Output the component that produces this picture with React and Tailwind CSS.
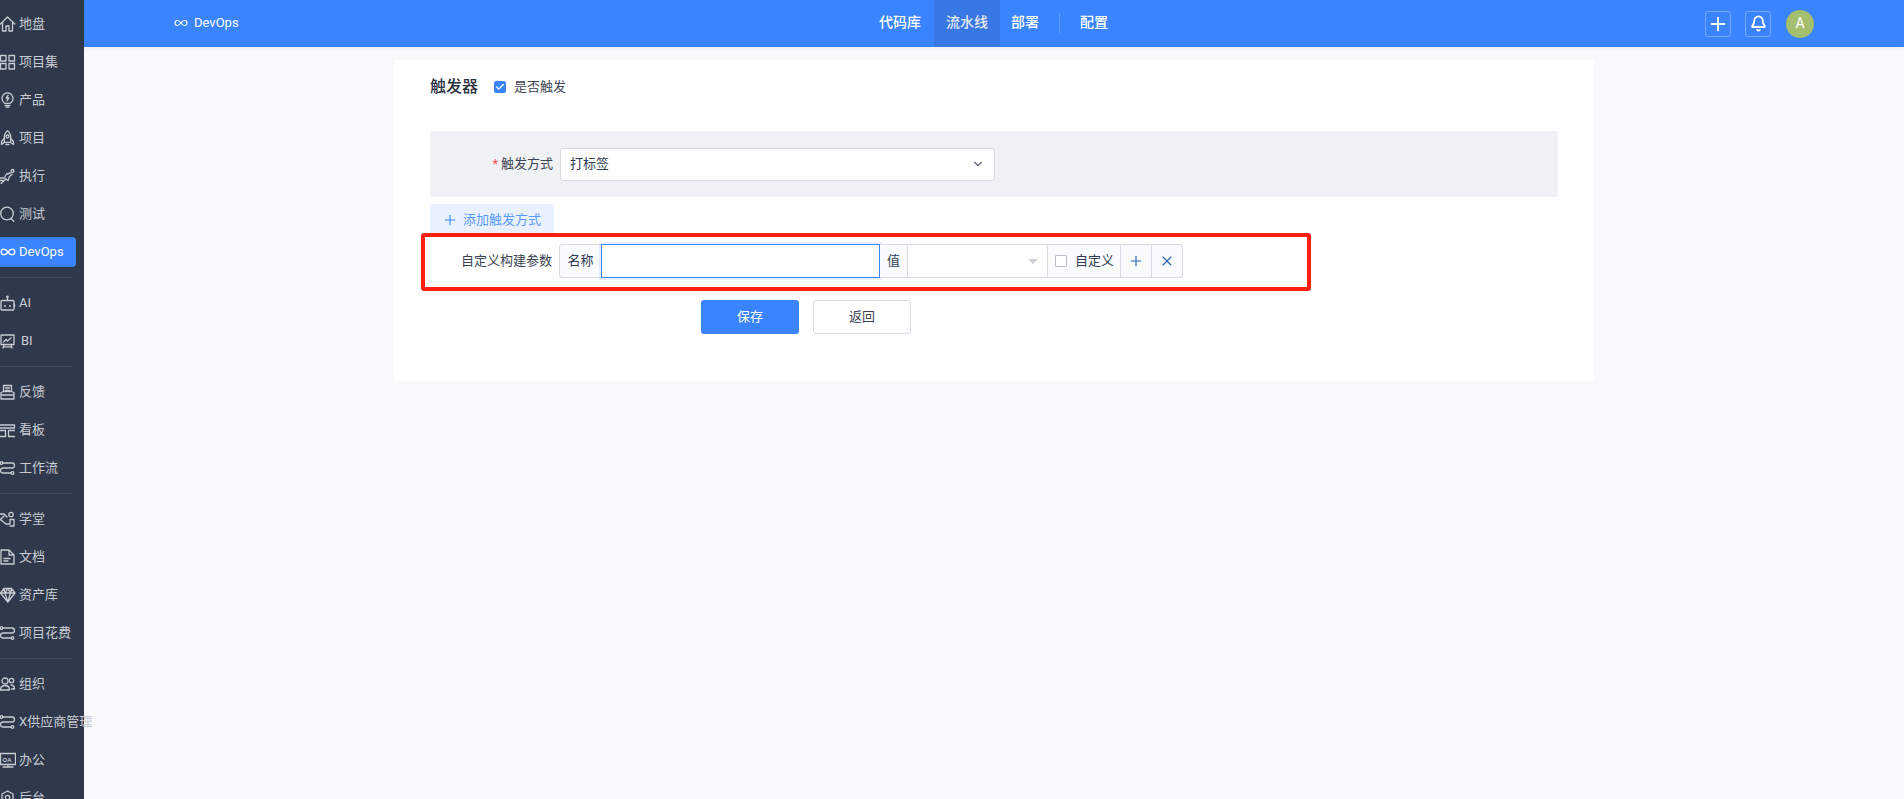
import React from "react";
import { Check, ChevronDown, Plus, X, Bell } from "lucide-react";

const FONT = "font-['Roboto','Noto_Sans_CJK_SC',sans-serif]";

const iconProps = {
  width: 16,
  height: 16,
  viewBox: "0 0 16 16",
  fill: "none",
  stroke: "currentColor",
  strokeWidth: 1.3,
  strokeLinecap: "round",
  strokeLinejoin: "round",
};

const Home = () => (
  <svg {...iconProps}>
    <path d="M.5 8 7.500 1 14.800 8M2.500 6.500v8.500h3.500v-5h3v5h3.500V6.500" />
  </svg>
);
const Grid = () => (
  <svg {...iconProps}>
    <rect x="0.500" y="1.500" width="5.500" height="5.500" />
    <rect x="9" y="1.500" width="5.500" height="5.500" />
    <rect x="0.500" y="9.500" width="5.500" height="5.500" />
    <rect x="9" y="9.500" width="5.500" height="5.500" />
  </svg>
);
const Bulb = () => (
  <svg {...iconProps}>
    <path d="M5 11.300A5.500 5.500 0 1 1 10 11.300z" />
    <path d="M5 13.300h5M6 15h3" />
    <path d="M8.200 3.200 6.200 6h2.600L6.800 8.800" />
  </svg>
);
const Rocket = () => (
  <svg {...iconProps}>
    <path d="M7.500.8c2.500 2 3.200 4.500 3.200 7v4.500H4.300V7.800c0-2.500.7-5 3.200-7z" />
    <circle cx="7.500" cy="6.500" r="1.500" />
    <path d="M4.300 8.500 1.500 11.500v3l2.800-2M10.700 8.500l2.800 3v3l-2.800-2M6 14.500h3" />
  </svg>
);
const Runner = () => (
  <svg {...iconProps}>
    <circle cx="12.500" cy="3" r="1.500" />
    <path d="M1 15.500 6 11l2 1.500 1.500-4 2.500-2M10.500 5 6.500 6 5 8.500M.5 10H5M0 12.500h3" />
  </svg>
);
const SearchIcon = () => (
  <svg {...iconProps}>
    <circle cx="7" cy="7.500" r="6.300" />
    <path d="M11 12.500l2.800 2.800" />
  </svg>
);
const Infinite = () => (
  <svg {...iconProps}>
    <path d="M8 8C6.500 6 5.500 5.200 4 5.200a2.800 2.800 0 0 0 0 5.600C5.500 10.800 6.500 10 8 8s2.500-2.800 4-2.800a2.800 2.800 0 0 1 0 5.600C10.500 10.800 9.500 10 8 8z" />
  </svg>
);
const Robot = () => (
  <svg {...iconProps}>
    <rect x="1" y="5.500" width="13" height="9.500" rx="1" />
    <path d="M7.500 5.500V2.500M4.500 11h1M9.500 11h1M14.500 9v3" />
    <circle cx="7.500" cy="1.800" r=".7" />
  </svg>
);
const Board = () => (
  <svg {...iconProps}>
    <rect x="1" y="2" width="13" height="9.500" />
    <path d="M3.500 9 6 6.500l1.500 1.500L11 5M4 11.500 3 15M11 11.500l1 3.500M3.500 13.800h8" />
  </svg>
);
const Tray = () => (
  <svg {...iconProps}>
    <path d="M3.500 7.500V1.500h8v6M1 8.500l2.500-1h8l2.500 1V15H1zM5.500 4h4M5.500 6.500h4M1 11h13" />
  </svg>
);
const Kanban = () => (
  <svg {...iconProps}>
    <path d="M0 3h14.500M0 6h14.500v-3M0 8.500h5.500v6H0M8.500 8.500h6M8.500 8.500v6h6" />
  </svg>
);
const Flow = () => (
  <svg {...iconProps}>
    <circle cx="1.500" cy="3" r="1.300" />
    <circle cx="12.500" cy="13" r="1.300" />
    <path d="M3 3h9a2.500 2.500 0 0 1 0 5H3a2.500 2.500 0 0 0 0 5h8" />
  </svg>
);
const School = () => (
  <svg {...iconProps}>
    <circle cx="11" cy="3.500" r="2.200" />
    <path d="M0 3h4l3 3M0 9l4-4M1 9l5 4h4V8.500h4V15h-4" />
  </svg>
);
const Doc = () => (
  <svg {...iconProps}>
    <path d="M1 15V1h8l5 5v9zM9 1v5h5M4 9.500h6M4 12h4" />
  </svg>
);
const Diamond = () => (
  <svg {...iconProps}>
    <path d="M4 1.500h7.500L15 6l-7.200 9L.5 6zM.5 6h14.500M5 6l2.800 9L10.500 6M4 1.500 5 6l2.800-4.500L10.500 6l1-4.500" />
  </svg>
);
const Team = () => (
  <svg {...iconProps}>
    <circle cx="5" cy="5" r="3" />
    <path d="M.5 14c0-3 2-4.500 4.500-4.500S9.500 11 9.500 14z" />
    <circle cx="11.500" cy="4.500" r="2.200" />
    <path d="M11 9c2.200 0 3.500 1.500 3.500 4h-3" />
  </svg>
);
const Office = () => (
  <svg {...iconProps}>
    <rect x="0.500" y="1.500" width="15" height="11" />
    <path d="M8 12.500V15M3 15h10" />
    <text x="2.500" y="9.500" fontSize="6" fontWeight="700" fill="currentColor" stroke="none" fontFamily="Liberation Sans">OA</text>
  </svg>
);
const Gear = () => (
  <svg {...iconProps}>
    <path d="M7.500 1 13 4v7l-5.500 3.500L2 11V4z" />
    <circle cx="7.500" cy="7.500" r="2.200" />
  </svg>
);

const SIDEBAR = [
  [
    { label: "地盘", Icon: Home },
    { label: "项目集", Icon: Grid },
    { label: "产品", Icon: Bulb },
    { label: "项目", Icon: Rocket },
    { label: "执行", Icon: Runner },
    { label: "测试", Icon: SearchIcon },
    { label: "DevOps", Icon: Infinite, active: true },
  ],
  [
    { label: "AI", Icon: Robot },
    { label: "BI", Icon: Board, wide: true },
  ],
  [
    { label: "反馈", Icon: Tray },
    { label: "看板", Icon: Kanban },
    { label: "工作流", Icon: Flow },
  ],
  [
    { label: "学堂", Icon: School },
    { label: "文档", Icon: Doc },
    { label: "资产库", Icon: Diamond },
    { label: "项目花费", Icon: Flow },
  ],
  [
    { label: "组织", Icon: Team },
    { label: "X供应商管理", Icon: Flow },
    { label: "办公", Icon: Office },
    { label: "后台", Icon: Gear },
  ],
];

function SideItem({ item }) {
  const { label, Icon, active, wide } = item;
  return (
    <div className="h-[38px] flex items-center">
      <div
        className={
          active
            ? "w-[76px] h-[30px] flex items-center rounded-r-[4px] bg-[#3a84ff] text-white"
            : "w-[76px] h-[30px] flex items-center text-[#c8ccd3]"
        }
      >
        <span className="w-[16px] shrink-0 flex">
          <Icon />
        </span>
        <span className={wide ? "ml-[5px] text-[13px] whitespace-nowrap" : "ml-[3px] text-[13px] whitespace-nowrap"}>
          {label}
        </span>
      </div>
    </div>
  );
}

function Sidebar() {
  return (
    <aside className="w-[84px] shrink-0 bg-[#2f394b] pt-[5px] h-[799px]">
      {SIDEBAR.map((group, i) => (
        <div key={i}>
          {i > 0 && (
            <div className="h-[13px] flex items-center">
              <div className="w-[72px] h-px bg-[#434c5d]" />
            </div>
          )}
          {group.map((item) => (
            <SideItem key={item.label} item={item} />
          ))}
        </div>
      ))}
    </aside>
  );
}

function Header() {
  return (
    <header className="relative h-[47px] shrink-0 flex items-center bg-[#3a84ff] text-white shadow-[0_1px_4px_rgba(0,0,0,0.05)]">
      <div className="ml-[90px] pb-[2px] flex items-center w-[705px] text-[13px]">
        <span className="w-[14px] flex">
          <svg width="14" height="14" viewBox="0 0 16 16" fill="none" stroke="currentColor" strokeWidth="1.300">
            <path d="M8 8C6.500 6 5.500 5.200 4 5.200a2.800 2.800 0 0 0 0 5.600C5.500 10.800 6.500 10 8 8s2.500-2.800 4-2.800a2.800 2.800 0 0 1 0 5.600C10.500 10.800 9.500 10 8 8z" />
          </svg>
        </span>
        <span className="ml-[6px]">DevOps</span>
      </div>
      <nav className="flex items-center h-full text-[14px] font-medium">
        <span className="w-[55px] pb-[2px]">代码库</span>
        <span className="h-full w-[66px] pb-[2px] flex items-center justify-center bg-[#3878e4] text-[#e6eaf2]">流水线</span>
        <span className="ml-[11px] pb-[2px]">部署</span>
        <span className="ml-[20px] w-px h-[20px] mb-[2px] bg-white/20" />
        <span className="ml-[20px] pb-[2px]">配置</span>
      </nav>
      <div className="ml-auto flex items-center mr-[90px]">
        <span className="w-[26px] h-[26px] flex items-center justify-center rounded-[3px] border border-white/30">
          <Plus size={22} strokeWidth={2} />
        </span>
        <span className="ml-[14px] w-[26px] h-[26px] flex items-center justify-center rounded-[3px] border border-white/30">
          <Bell size={17} strokeWidth={2.6} />
        </span>
        <span className="ml-[15px] w-[28px] h-[28px] rounded-full flex items-center justify-center bg-[#a6bf6f] text-[14px]">A</span>
      </div>
    </header>
  );
}

function TriggerForm() {
  return (
    <section className="relative w-[1200px] h-[321px] mx-auto mt-[13px] bg-white rounded-[2px] px-[36px]">
      <div className="flex items-center h-[53px]">
        <h2 className="text-[16px] font-medium text-[#2b3240]">触发器</h2>
        <span className="ml-[16px] w-[12px] h-[12px] rounded-[2px] bg-[#3a84ff] flex items-center justify-center text-white">
          <Check size={10} strokeWidth={3} />
        </span>
        <span className="ml-[8px] text-[13px] text-[#3c4353]">是否触发</span>
      </div>

      <div className="mt-[18px] h-[66px] bg-[#f0f1f4] flex items-center">
        <label className="w-[123px] text-right text-[13px] text-[#3c4353]">
          <span className="text-[#f5534f] mr-[3px]">*</span>触发方式
        </label>
        <div className="ml-[7px] w-[435px] h-[33px] flex items-center justify-between px-[9px] bg-white rounded-[3px] border border-[#d8dbe6] text-[13px] text-[#313c52]">
          打标签
          <ChevronDown size={14} className="text-[#5b6478]" />
        </div>
      </div>

      <button className="mt-[7px] w-[124px] h-[32px] flex items-center pl-[12px] gap-[5px] rounded-[3px] bg-[#e9f1fe] text-[13px] text-[#5a9bff]">
        <Plus size={16} strokeWidth={1.6} className="text-[#3a84ff]" />
        添加触发方式
      </button>

      <div className="mt-[8px] flex items-center h-[34px]">
        <label className="w-[122px] text-right text-[13px] text-[#3c4353]">自定义构建参数</label>
        <div className="ml-[7px] flex h-[34px] text-[13px] text-[#313c52]">
          <span className="w-[42px] flex items-center justify-center bg-[#fafbfd] border border-r-0 border-[#d8dbe6] rounded-l-[3px]">名称</span>
          <input className="w-[279px] h-full bg-white border border-[#3a84ff] shadow-[0_0_0_2px_rgba(58,132,255,0.12)] outline-none" />
          <span className="w-[28px] flex items-center justify-center bg-[#fafbfd] border-y border-r border-[#d8dbe6]">值</span>
          <div className="w-[139px] flex items-center justify-end pr-[9px] bg-white border-y border-[#d8dbe6]">
            <span className="w-0 h-0 border-x-[5px] border-x-transparent border-t-[5px] border-t-[#ccd0d9]" />
          </div>
          <span className="w-[74px] flex items-center pl-[7px] bg-[#fafbfd] border border-[#d8dbe6]">
            <span className="w-[12px] h-[12px] border border-[#b8bdc9] rounded-[1px] bg-white" />
            <span className="ml-[8px]">自定义</span>
          </span>
          <span className="w-[31px] flex items-center justify-center bg-[#fafbfd] border-y border-r border-[#d8dbe6] text-[#2d5fb4]">
            <Plus size={16} strokeWidth={1.7} />
          </span>
          <span className="w-[31px] flex items-center justify-center bg-[#fafbfd] border-y border-r border-[#d8dbe6] rounded-r-[3px] text-[#2d5fb4]">
            <X size={16} strokeWidth={1.7} />
          </span>
        </div>
      </div>

      <div className="mt-[22px] flex ml-[271px]">
        <button className="w-[98px] h-[34px] rounded-[3px] bg-[#3a84ff] text-white text-[13px]">保存</button>
        <button className="ml-[14px] w-[98px] h-[34px] rounded-[3px] bg-white border border-[#d8dbe6] text-[#3c4353] text-[13px]">返回</button>
      </div>

      {/* red annotation drawn on top of the screenshot */}
      <div className="absolute left-[27px] top-[173px] w-[890px] h-[58px] border-[4px] border-[#ff1f0f] rounded-[3px] pointer-events-none" />
    </section>
  );
}

export default function App() {
  return (
    <div className={`${FONT} flex h-[799px] overflow-hidden bg-[#f8f9fb]`}>
      <Sidebar />
      <main className="relative flex-1 min-w-0 flex flex-col">
        <Header />
        <TriggerForm />
      </main>
    </div>
  );
}
